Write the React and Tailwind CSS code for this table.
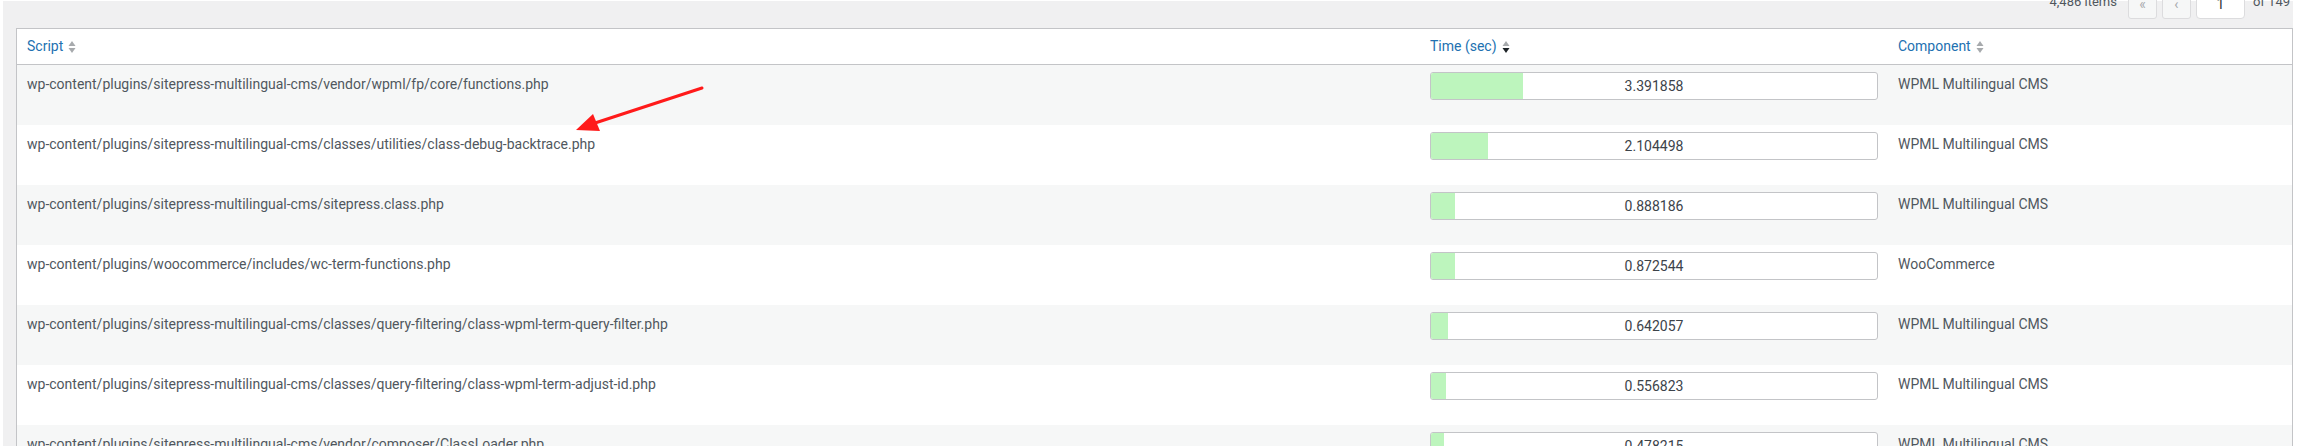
import React from 'react';

const rows = [
  { script: 'wp-content/plugins/sitepress-multilingual-cms/vendor/wpml/fp/core/functions.php', time: 3.391858, component: 'WPML Multilingual CMS' },
  { script: 'wp-content/plugins/sitepress-multilingual-cms/classes/utilities/class-debug-backtrace.php', time: 2.104498, component: 'WPML Multilingual CMS' },
  { script: 'wp-content/plugins/sitepress-multilingual-cms/sitepress.class.php', time: 0.888186, component: 'WPML Multilingual CMS' },
  { script: 'wp-content/plugins/woocommerce/includes/wc-term-functions.php', time: 0.872544, component: 'WooCommerce' },
  { script: 'wp-content/plugins/sitepress-multilingual-cms/classes/query-filtering/class-wpml-term-query-filter.php', time: 0.642057, component: 'WPML Multilingual CMS' },
  { script: 'wp-content/plugins/sitepress-multilingual-cms/classes/query-filtering/class-wpml-term-adjust-id.php', time: 0.556823, component: 'WPML Multilingual CMS' },
  { script: 'wp-content/plugins/sitepress-multilingual-cms/vendor/composer/ClassLoader.php', time: 0.478215, component: 'WPML Multilingual CMS' },
];

const SortIcon = ({ active }) => (
  <svg width="8" height="14" viewBox="0 0 8 14" className="shrink-0">
    <path d="M0.5 6 L4 1 L7.5 6 Z" fill="#a7aaad" />
    <path d="M0.5 8 L4 13 L7.5 8 Z" fill={active ? '#1d2327' : '#a7aaad'} />
  </svg>
);

const HeaderCell = ({ label, active }) => (
  <div className="flex items-center gap-[5px] px-[10px] text-[#2271b1] text-[14px]">
    <span>{label}</span>
    <SortIcon active={active} />
  </div>
);

export default function App() {
  return (
    <div className="w-[2299px] h-[446px] overflow-hidden bg-white font-['Roboto',sans-serif] text-[14px] text-[#50575e]">
      <div className="relative ml-[3px] mt-[1px] w-[2290px] h-[445px] bg-[#f0f0f1] pl-[13px]">
        {/* pagination, mostly scrolled off the top */}
        <div className="h-[27px] flex items-end justify-end gap-[5px] pb-[9px] pr-[3px]">
          <span className="mr-[6px] leading-[26px] h-[30px] text-[13px]">4,486 items</span>
          <span className="w-[29px] h-[30px] flex items-center justify-center rounded-[3px] border border-[#dcdcde] bg-[#f6f7f7] text-[#a7aaad]">«</span>
          <span className="w-[29px] h-[30px] flex items-center justify-center rounded-[3px] border border-[#dcdcde] bg-[#f6f7f7] text-[#a7aaad]">‹</span>
          <span className="w-[49px] h-[30px] flex items-center justify-center rounded-[4px] border border-[#dcdcde] bg-white text-[#2c3338]">1</span>
          <span className="ml-[3px] leading-[26px] h-[30px] text-[13px]">of 149</span>
        </div>

        <div className="border-t border-l border-r border-[#c3c4c7] bg-white">
          <div className="grid grid-cols-[1403px_468px_1fr] h-[36px] items-center border-b border-[#c3c4c7]">
            <HeaderCell label="Script" />
            <HeaderCell label="Time (sec)" active />
            <HeaderCell label="Component" />
          </div>

          {rows.map((r, i) => (
            <div
              key={i}
              className={`grid grid-cols-[1403px_468px_1fr] h-[60px] ${i % 2 === 0 ? 'bg-[#f6f7f7]' : 'bg-white'}`}
            >
              <div className="px-[10px] pt-[9px] leading-[20px]">{r.script}</div>
              <div className="px-[10px] pt-[7px]">
                <div className="relative h-[28px] rounded-[3px] border border-[#c3c4c7] bg-white overflow-hidden">
                  <div className="absolute inset-y-0 left-0 bg-[#bdf5bd]" style={{ width: `${r.time * 6.1}%` }} />
                  <div className="relative h-full flex items-center justify-center text-[14px] text-[#3c434a]">
                    {r.time.toFixed(6)}
                  </div>
                </div>
              </div>
              <div className="px-[10px] pt-[9px] leading-[20px]">{r.component}</div>
            </div>
          ))}
        </div>

        {/* annotation arrow */}
        <svg className="absolute left-0 top-0 pointer-events-none" width="2290" height="445">
          <line x1="699" y1="87" x2="592" y2="122" stroke="#ff1a1a" strokeWidth="3" strokeLinecap="round" />
          <path d="M573 129 L590 113 L597 130 Z" fill="#ff1a1a" />
        </svg>
      </div>
    </div>
  );
}
